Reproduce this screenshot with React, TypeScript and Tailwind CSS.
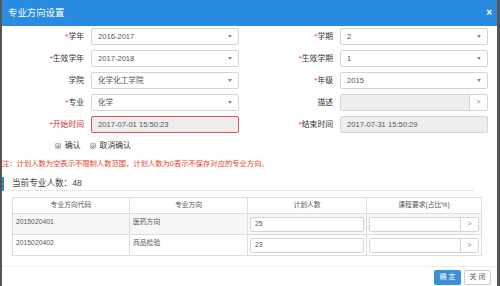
import React from 'react';

const font = { fontFamily: '"Liberation Sans", "Noto Sans CJK SC", sans-serif' };

interface FieldProps {
  label: string;
  required?: boolean;
  redLabel?: boolean;
  labelWidth: string;
  children: React.ReactNode;
}

const Field: React.FC<FieldProps> = ({ label, required, redLabel, labelWidth, children }) => (
  <div className="flex items-center">
    <div
      className={`${labelWidth} text-right text-[7.8px] pr-[7px] ${redLabel ? 'text-[#c9302c]' : 'text-[#333]'}`}
    >
      {required && <span className="text-[#e53935]">*</span>}
      {label}
    </div>
    {children}
  </div>
);

const Select: React.FC<{ value: string }> = ({ value }) => (
  <div className="w-[148px] h-[17px] border border-[#d4d4d4] rounded-[2px] bg-white flex items-center justify-between pl-[6px] pr-[6px] text-[7.6px] text-[#555]">
    <span>{value}</span>
    <span className="w-0 h-0 border-l-[2px] border-r-[2px] border-t-[3px] border-l-transparent border-r-transparent border-t-[#888]"></span>
  </div>
);

const CheckBox: React.FC<{ label: string }> = ({ label }) => (
  <div className="flex items-center gap-[4px]">
    <div className="w-[6px] h-[6px] bg-[#ddd] border border-[#bbb] rounded-[1px] flex items-center justify-center">
      <svg width="5" height="5" viewBox="0 0 10 10">
        <path d="M1.5 5.2 L4 7.6 L8.6 2.4" stroke="#333" strokeWidth="1.8" fill="none" />
      </svg>
    </div>
    <span className="text-[7.8px] text-[#333]">{label}</span>
  </div>
);

const rows = [
  { code: '2015020401', name: '医药方向', plan: '25' },
  { code: '2015020402', name: '商品检验', plan: '23' },
];

export default function App() {
  return (
    <div className="w-[500px] h-[286px] flex bg-[#4a4a4a] overflow-hidden" style={font}>
      <div className="w-[2px] bg-[#555]"></div>
      <div className="w-[495px] bg-white flex flex-col">
        {/* header */}
        <div className="h-[26px] bg-[#2a8ce0] flex items-center justify-between pl-[6px] pr-[5px]">
          <span className="text-white text-[9.4px]">专业方向设置</span>
          <span className="text-white text-[10px] font-bold leading-none">×</span>
        </div>

        {/* form */}
        <div className="pt-[2px] flex flex-col gap-[5px]">
          <div className="flex h-[17px]">
            <Field label="学年" required labelWidth="w-[89px]"><Select value="2016-2017" /></Field>
            <Field label="学期" required labelWidth="w-[101px]"><Select value="2" /></Field>
          </div>
          <div className="flex h-[17px]">
            <Field label="生效学年" required labelWidth="w-[89px]"><Select value="2017-2018" /></Field>
            <Field label="生效学期" required labelWidth="w-[101px]"><Select value="1" /></Field>
          </div>
          <div className="flex h-[17px]">
            <Field label="学院" labelWidth="w-[89px]"><Select value="化学化工学院" /></Field>
            <Field label="年级" required labelWidth="w-[101px]"><Select value="2015" /></Field>
          </div>
          <div className="flex h-[17px]">
            <Field label="专业" required labelWidth="w-[89px]"><Select value="化学" /></Field>
            <Field label="描述" labelWidth="w-[101px]">
              <div className="w-[148px] h-[17px] flex border border-[#d4d4d4] rounded-[2px]">
                <div className="flex-1 bg-[#eee]"></div>
                <div className="w-[18px] bg-white border-l border-[#d4d4d4] flex items-center justify-center text-[7px] text-[#777]">&gt;</div>
              </div>
            </Field>
          </div>
          <div className="flex h-[17px]">
            <Field label="开始时间" required redLabel labelWidth="w-[89px]">
              <div className="w-[148px] h-[17px] bg-[#eee] border border-[#d9534f] rounded-[2px] flex items-center pl-[6px] text-[7.6px] text-[#555]">
                2017-07-01 15:50:23
              </div>
            </Field>
            <Field label="结束时间" required labelWidth="w-[101px]">
              <div className="w-[148px] h-[17px] bg-[#eee] border border-[#d4d4d4] rounded-[2px] flex items-center pl-[6px] text-[7.6px] text-[#555]">
                2017-07-31 15:50:29
              </div>
            </Field>
          </div>
        </div>

        {/* checkboxes */}
        <div className="mt-[7px] h-[12px] flex items-center gap-[9px] pl-[53px]">
          <CheckBox label="确认" />
          <CheckBox label="取消确认" />
        </div>

        {/* note */}
        <div className="mt-[6px] h-[12px] flex items-center text-[7.3px] text-[#e8412c] whitespace-nowrap">
          注：计划人数为空表示不限制人数范围，计划人数为0表示不保存对应的专业方向。
        </div>

        {/* heading */}
        <div className="mt-[7px] flex h-[14px]">
          <div className="w-[2px] bg-[#2a8ce0]"></div>
          <div className="ml-[8px] w-[461px] border-b border-dotted border-[#ccc] text-[8.6px] text-[#444] leading-[12px]">
            当前专业人数：48
          </div>
        </div>

        {/* table */}
        <div className="mt-[6px] ml-[10px] w-[470px]">
          <table className="w-full border-collapse text-[6.8px] text-[#555]">
            <thead>
              <tr className="h-[16px]">
                <th className="w-[117px] border border-[#ddd] font-normal">专业方向代码</th>
                <th className="w-[118px] border border-[#ddd] font-normal">专业方向</th>
                <th className="w-[119px] border border-[#ddd] font-normal">计划人数</th>
                <th className="border border-[#ddd] font-normal">课程要求(占比%)</th>
              </tr>
            </thead>
            <tbody>
              {rows.map((r, i) => (
                <tr key={r.code} className={`h-[21px] ${i === 0 ? 'bg-[#f7f7f7]' : 'bg-white'}`}>
                  <td className="border border-[#ddd] pl-[3px] pb-[4px]">{r.code}</td>
                  <td className="border border-[#ddd] pl-[3px] pb-[4px]">{r.name}</td>
                  <td className="border border-[#ddd] px-[2px]">
                    <div className="h-[15px] bg-white border border-[#d4d4d4] rounded-[2px] flex items-center pl-[4px]">{r.plan}</div>
                  </td>
                  <td className="border border-[#ddd] px-[2px]">
                    <div className="h-[15px] flex border border-[#d4d4d4] rounded-[2px] bg-white">
                      <div className="flex-1"></div>
                      <div className="w-[18px] border-l border-[#d4d4d4] flex items-center justify-center text-[6.5px] text-[#777]">&gt;</div>
                    </div>
                  </td>
                </tr>
              ))}
            </tbody>
          </table>
        </div>

        {/* footer */}
        <div className="mt-[10px] border-t border-[#eee] flex justify-end gap-[3px] pt-[3px] pr-[6px]">
          <div className="w-[27px] h-[15px] bg-[#3b8fd9] rounded-[2px] flex items-center justify-center text-white text-[7px]">确 定</div>
          <div className="w-[27px] h-[15px] bg-white border border-[#ccc] rounded-[2px] flex items-center justify-center text-[#555] text-[7px]">关 闭</div>
        </div>
      </div>
      <div className="flex-1 bg-[#555]"></div>
    </div>
  );
}
